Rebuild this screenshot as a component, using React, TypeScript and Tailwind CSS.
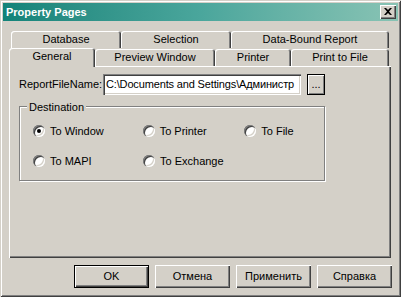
import React from 'react';

const font = { fontFamily: '"Liberation Sans", Arial, sans-serif' };

function Tab({ label, width, selected }: { label: string; width: string; selected?: boolean }) {
  return (
    <div
      className={`${width} ${
        selected ? 'h-[19px] -mb-[1px] z-10 bg-[#d4d0c8]' : 'h-[17px]'
      } flex items-center justify-center rounded-t-[3px] shadow-[inset_1px_1px_#ffffff,inset_-1px_0_#404040,inset_-2px_0_#808080] text-[11px] text-black`}
    >
      <span className={selected ? '-mt-[2px]' : ''}>{label}</span>
    </div>
  );
}

function Radio({ label, checked, col }: { label: string; checked?: boolean; col: string }) {
  return (
    <div className={`${col} flex items-center gap-[5px]`}>
      <div className="w-[12px] h-[12px] rounded-full bg-white shadow-[inset_1px_1px_#808080,inset_2px_2px_#404040,inset_-1px_-1px_#ffffff,inset_-2px_-2px_#d4d0c8] flex items-center justify-center">
        {checked && <div className="w-[4px] h-[4px] rounded-full bg-black" />}
      </div>
      <span className="text-[11px] text-black">{label}</span>
    </div>
  );
}

function Button({ label, isDefault }: { label: string; isDefault?: boolean }) {
  return (
    <div
      className={`w-[75px] h-[23px] flex items-center justify-center text-[11px] text-black bg-[#d4d0c8] ${
        isDefault
          ? 'border border-black shadow-[inset_1px_1px_#ffffff,inset_-1px_-1px_#404040,inset_-2px_-2px_#808080]'
          : 'shadow-[inset_1px_1px_#ffffff,inset_-1px_-1px_#404040,inset_-2px_-2px_#808080]'
      }`}
    >
      {label}
    </div>
  );
}

export default function App() {
  return (
    <div
      className="w-[401px] h-[297px] bg-[#d4d0c8] p-[3px] flex flex-col shadow-[inset_1px_1px_#d4d0c8,inset_-1px_-1px_#404040,inset_2px_2px_#ffffff,inset_-2px_-2px_#808080]"
      style={font}
    >
      {/* Title bar */}
      <div className="h-[18px] flex items-center justify-between pl-[3px] pr-[2px] bg-gradient-to-r from-[#128379] via-[#4aa69c] to-[#88c3b4]">
        <span className="text-[11px] font-bold text-white">Property Pages</span>
        <div className="w-[16px] h-[14px] bg-[#d4d0c8] flex items-center justify-center shadow-[inset_1px_1px_#ffffff,inset_-1px_-1px_#404040,inset_-2px_-2px_#808080]">
          <svg width="8" height="7" viewBox="0 0 8 7" className="-mt-[1px]">
            <path d="M0 0h2l2 2 2-2h2L5 3.5 8 7H6L4 5 2 7H0l3-3.5z" fill="#000" />
          </svg>
        </div>
      </div>

      {/* Tabs */}
      <div className="px-[6px] pt-[10px] flex flex-col">
        <div className="flex pl-[2px]">
          <Tab label="Database" width="w-[110px]" />
          <Tab label="Selection" width="w-[110px]" />
          <Tab label="Data-Bound Report" width="w-[158px]" />
        </div>
        <div className="flex items-end">
          <Tab label="General" width="w-[86px]" selected />
          <Tab label="Preview Window" width="w-[120px]" />
          <Tab label="Printer" width="w-[76px]" />
          <Tab label="Print to File" width="w-[98px]" />
        </div>

        {/* Panel */}
        <div className="w-[382px] h-[192px] pt-[8px] pl-[10px] flex flex-col shadow-[inset_1px_1px_#ffffff,inset_-1px_-1px_#404040,inset_-2px_-2px_#808080]">
          <div className="flex items-center h-[21px]">
            <span className="w-[84px] text-[11px] text-black">ReportFileName:</span>
            <div className="w-[198px] h-[21px] bg-white flex items-center pl-[3px] overflow-hidden whitespace-nowrap text-[11px] tracking-[-0.15px] text-black shadow-[inset_1px_1px_#808080,inset_2px_2px_#404040,inset_-1px_-1px_#ffffff,inset_-2px_-2px_#d4d0c8]">
              <span>C:\Documents and Settings\Администр</span>
            </div>
            <div className="ml-[6px] w-[18px] h-[21px] border border-black flex items-center justify-center text-[11px] text-black shadow-[inset_1px_1px_#ffffff,inset_-1px_-1px_#808080]">
              ...
            </div>
          </div>

          {/* Destination group */}
          <div className="relative mt-[11px] w-[306px] h-[75px] border border-[#808080] shadow-[inset_1px_1px_#ffffff,1px_1px_#ffffff]">
            <span className="absolute -top-[8px] left-[7px] px-[2px] bg-[#d4d0c8] text-[11px] text-black">
              Destination
            </span>
            <div className="flex pl-[13px] pt-[16px]">
              <Radio label="To Window" checked col="w-[110px]" />
              <Radio label="To Printer" col="w-[102px]" />
              <Radio label="To File" col="w-[80px]" />
            </div>
            <div className="flex pl-[13px] pt-[13px]">
              <Radio label="To MAPI" col="w-[110px]" />
              <Radio label="To Exchange" col="w-[102px]" />
            </div>
          </div>
        </div>

        {/* Buttons */}
        <div className="flex justify-end gap-[6px] mt-[7px]">
          <Button label="OK" isDefault />
          <Button label="Отмена" />
          <Button label="Применить" />
          <Button label="Справка" />
        </div>
      </div>
    </div>
  );
}
